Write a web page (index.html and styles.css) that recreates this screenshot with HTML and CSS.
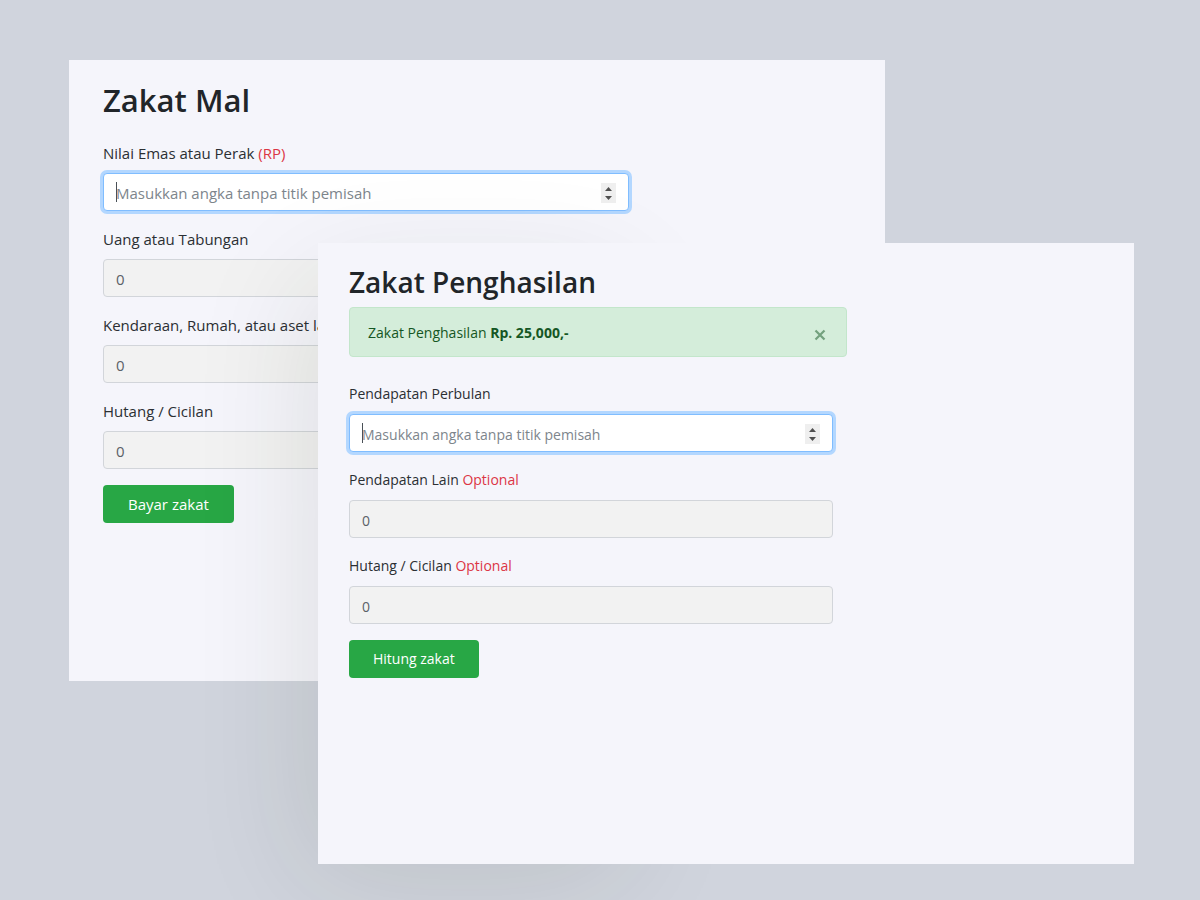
FILE: index.html
```html
<!DOCTYPE html>
<html lang="id">
<head>
<meta charset="utf-8">
<meta name="viewport" content="width=device-width, initial-scale=1">
<title>Kalkulator Zakat</title>
<link rel="stylesheet" href="styles.css">
</head>
<body>
<main class="stage">
  <section class="window window-mal">
    <div class="panel">
      <h2 class="title">Zakat Mal</h2>
      <form class="form">
        <div class="field">
          <label for="emas">Nilai Emas atau Perak <span class="note">(RP)</span></label>
          <input class="control active" id="emas" type="number" placeholder="Masukkan angka tanpa titik pemisah">
        </div>
        <div class="field">
          <label for="uang">Uang atau Tabungan</label>
          <input class="control" id="uang" type="number" value="0">
        </div>
        <div class="field">
          <label for="aset">Kendaraan, Rumah, atau aset lain</label>
          <input class="control" id="aset" type="number" value="0">
        </div>
        <div class="field">
          <label for="hutang-mal">Hutang / Cicilan</label>
          <input class="control" id="hutang-mal" type="number" value="0">
        </div>
        <button class="submit" type="button">Bayar zakat</button>
      </form>
    </div>
  </section>

  <section class="window window-penghasilan">
    <div class="panel">
      <h2 class="title">Zakat Penghasilan</h2>
      <div class="alert" role="alert">
        <p class="alert-text">Zakat Penghasilan <strong>Rp. 25,000,-</strong></p>
        <button class="close" type="button" aria-label="Tutup">
          <svg width="12" height="12" viewBox="0 0 12 12" aria-hidden="true"><path d="M1.500 1.500l9 9M10.500 1.500l-9 9" fill="none" stroke="currentColor" stroke-width="2.200"/></svg>
        </button>
      </div>
      <form class="form">
        <div class="field">
          <label for="pendapatan">Pendapatan Perbulan</label>
          <input class="control active" id="pendapatan" type="number" placeholder="Masukkan angka tanpa titik pemisah">
        </div>
        <div class="field">
          <label for="lain">Pendapatan Lain <span class="note">Optional</span></label>
          <input class="control" id="lain" type="number" value="0">
        </div>
        <div class="field">
          <label for="hutang">Hutang / Cicilan <span class="note">Optional</span></label>
          <input class="control" id="hutang" type="number" value="0">
        </div>
        <button class="submit" type="button">Hitung zakat</button>
      </form>
    </div>
  </section>
</main>
</body>
</html>
```

FILE: styles.css
```css
* { box-sizing: border-box; }

body {
  margin: 0;
  background: #d0d4dd;
  color: #2b2f33;
  font-family: "Segoe UI", "Open Sans", "Noto Sans", sans-serif;
  font-size: 15px;
  line-height: 24px;
}

.stage {
  position: relative;
  min-height: 100vh;
  overflow: hidden;
}

/* Overlapping windows on the stage */
.window {
  position: absolute;
  width: 68%;
}

.window-mal { left: 69px; top: 60px; }
.window-penghasilan { left: 318px; top: 243px; font-size: 14px; }

/* Soft shade cast behind the front window */
.window-penghasilan::before {
  content: "";
  position: absolute;
  left: 0;
  top: 8%;
  width: 36%;
  height: 92%;
  box-shadow: 0 0 120px 10px rgba(40, 45, 15, 0.11);
}

.panel {
  position: relative;
  min-height: 621px;
  background: #f5f5fb;
}

.window-mal .panel { padding: 20px 34px; }
.window-penghasilan .panel { padding: 19px 31px; }

.title {
  margin: 0;
  color: #212529;
  font-size: 31px;
  font-weight: 600;
  line-height: 40px;
}

.window-mal .title { margin-bottom: 21px; }
.window-penghasilan .title { margin-bottom: 5px; font-size: 28px; }

.form {
  display: flex;
  flex-direction: column;
  align-items: flex-start;
  gap: 16px;
}

.window-mal .form { max-width: 526px; }
.window-penghasilan .form { max-width: 484px; }

.field {
  display: flex;
  flex-direction: column;
  gap: 8px;
  width: 100%;
}

.note { color: #dc3545; }

.control {
  width: 100%;
  height: 38px;
  padding: 7px 12px 5px;
  border: 1px solid #d2d5da;
  border-radius: 4px;
  background: #f2f2f2;
  color: #5b6168;
  font: inherit;
  outline: 0;
}

.control::placeholder { color: #7d858c; opacity: 1; }

.active {
  border-color: #80bdff;
  background: linear-gradient(#495057, #495057) 12px center / 1px 20px no-repeat #fff;
  box-shadow: 0 0 0 3px #b3d7ff;
}

.active::-webkit-inner-spin-button {
  appearance: none;
  width: 15px;
  height: 20px;
  opacity: 1;
  background: #efefef url("data:image/svg+xml,%3Csvg xmlns='http://www.w3.org/2000/svg' viewBox='0 0 15 20'%3E%3Cpath d='M4 8l3.500-4L11 8zM4 13l3.500 4L11 13z' fill='%23505050'/%3E%3C/svg%3E") center / 15px 20px no-repeat;
}

.submit {
  height: 38px;
  padding: 0 24px;
  border: 0;
  border-radius: 4px;
  background: #28a745;
  color: #fff;
  font: inherit;
}

.window-mal .submit { padding: 0 25px; }

.alert {
  display: flex;
  align-items: center;
  justify-content: space-between;
  max-width: 498px;
  margin-bottom: 25px;
  padding: 13px 18px 11px;
  border: 1px solid #c3e6cb;
  border-radius: 4px;
  background: #d4edda;
  color: #155724;
}

.alert-text { margin: 0; }

.close {
  display: flex;
  padding: 4px 2px 0;
  border: 0;
  background: none;
  color: #155724;
  opacity: 0.5;
}
```
